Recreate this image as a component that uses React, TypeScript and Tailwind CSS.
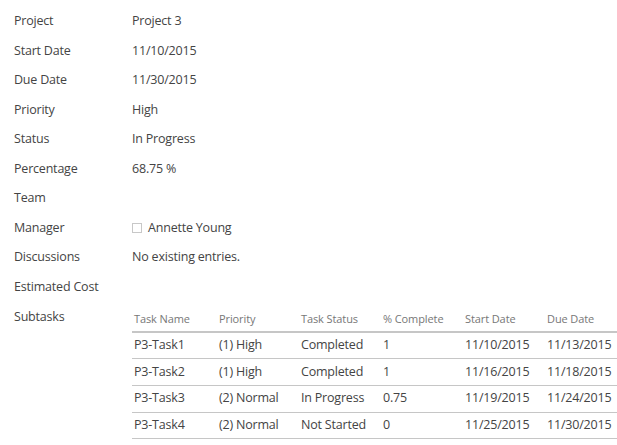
const fields: { label: string; value?: string; person?: boolean }[] = [
  { label: 'Project', value: 'Project 3' },
  { label: 'Start Date', value: '11/10/2015' },
  { label: 'Due Date', value: '11/30/2015' },
  { label: 'Priority', value: 'High' },
  { label: 'Status', value: 'In Progress' },
  { label: 'Percentage', value: '68.75 %' },
  { label: 'Team' },
  { label: 'Manager', value: 'Annette Young', person: true },
  { label: 'Discussions', value: 'No existing entries.' },
  { label: 'Estimated Cost' },
]

const subtasks = [
  ['P3-Task1', '(1) High', 'Completed', '1', '11/10/2015', '11/13/2015'],
  ['P3-Task2', '(1) High', 'Completed', '1', '11/16/2015', '11/18/2015'],
  ['P3-Task3', '(2) Normal', 'In Progress', '0.75', '11/19/2015', '11/24/2015'],
  ['P3-Task4', '(2) Normal', 'Not Started', '0', '11/25/2015', '11/30/2015'],
]

const headers = ['Task Name', 'Priority', 'Task Status', '% Complete', 'Start Date', 'Due Date']
const colWidths = ['w-[85px]', 'w-[82px]', 'w-[82px]', 'w-[82px]', 'w-[82px]', '']

export default function App() {
  return (
    <div className="min-h-[445px] w-[617px] bg-white pt-[7px] text-[12.5px] tracking-[-0.2px] text-[#444] font-['Open_Sans','Noto_Sans',sans-serif]">
      {fields.map((f) => (
        <div key={f.label} className="flex h-[29.5px] items-center">
          <div className="w-[132px] pl-[14px]">{f.label}</div>
          <div className="flex items-center">
            {f.person && (
              <span className="mr-[6px] inline-block h-[10px] w-[10px] border border-[#c8c8c8]" />
            )}
            {f.value}
          </div>
        </div>
      ))}
      <div className="flex">
        <div className="w-[132px] pl-[14px] pt-[6px]">Subtasks</div>
        <table className="mt-[4px] flex-1 border-collapse text-left">
          <thead>
            <tr className="h-[26px] border-b-2 border-[#c6c6c6] text-[11px] tracking-[-0.1px] text-[#777]">
              {headers.map((h, i) => (
                <th key={h} className={`${colWidths[i]} px-[2px] pt-[1px] font-normal`}>
                  {h}
                </th>
              ))}
            </tr>
          </thead>
          <tbody>
            {subtasks.map((row) => (
              <tr key={row[0]} className="h-[26.7px] border-b border-[#c6c6c6]">
                {row.map((c, i) => (
                  <td key={i} className="px-[2px] whitespace-nowrap">
                    {c}
                  </td>
                ))}
              </tr>
            ))}
          </tbody>
        </table>
      </div>
    </div>
  )
}
